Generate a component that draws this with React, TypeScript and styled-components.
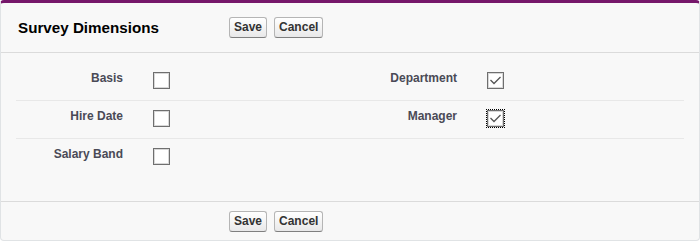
import styled, { createGlobalStyle } from 'styled-components';

const GlobalStyle = createGlobalStyle`
  html, body {
    margin: 0;
    padding: 0;
    background: #ffffff;
  }
  body {
    font-family: "Liberation Sans", Arial, sans-serif;
  }
`;

const PageBlock = styled.div`
  box-sizing: border-box;
  width: 700px;
  height: 241px;
  background: #f8f8f8;
  border: 1px solid #e0e3e5;
  border-top: 3px solid #76176a;
  border-radius: 4px;
  display: flex;
  flex-direction: column;
`;

const Bar = styled.div<{ $footer?: boolean }>`
  display: flex;
  align-items: center;
  height: ${(p) => (p.$footer ? '38px' : '49px')};
  padding-left: 17px;
  border-top: ${(p) => (p.$footer ? '1px solid #dbdbdb' : 'none')};
  border-bottom: ${(p) => (p.$footer ? 'none' : '1px solid #dbdbdb')};
`;

const Title = styled.h2`
  margin: 0;
  width: 211px;
  font-size: 15.2px;
  font-weight: bold;
  color: #000;
`;

const Buttons = styled.div`
  display: flex;
  gap: 7px;
`;

const Btn = styled.button`
  font-family: "Liberation Sans", Arial, sans-serif;
  font-size: 12px;
  font-weight: bold;
  line-height: 15px;
  color: #333;
  padding: 2px 4px;
  margin: 0;
  border: 1px solid #b5b5b5;
  border-bottom-color: #7f7f7f;
  border-radius: 3px;
  background: linear-gradient(#ffffff, #f4f4f4 50%, #e8e8e9);
  cursor: pointer;
`;

const Body = styled.div`
  flex: 1;
  padding: 10px 15px 0;
`;

const Row = styled.div<{ $last?: boolean }>`
  display: grid;
  grid-template-columns: 120px 214px 120px 214px;
  height: 38px;
  box-sizing: border-box;
  padding-top: 7px;
  border-bottom: ${(p) => (p.$last ? 'none' : '1px solid #e8e8e8')};
`;

const Label = styled.div`
  text-align: right;
  padding-right: 13px;
  font-size: 12px;
  font-weight: bold;
  line-height: 16px;
  color: #4a4a56;
`;

const DataCell = styled.div`
  padding-left: 17px;
  padding-top: 2px;
`;

const Box = styled.span<{ $focus?: boolean }>`
  display: block;
  box-sizing: border-box;
  width: 17px;
  height: 17px;
  background: #fff;
  border: 1px solid #6f6f6f;
  box-shadow: inset 0 0 0 1px #d8d8d8;
  outline: ${(p) => (p.$focus ? '1px dotted #000' : 'none')};
  outline-offset: 0;
  svg {
    display: block;
  }
`;

const Check = ({ checked, focus }: { checked?: boolean; focus?: boolean }) => (
  <Box $focus={focus}>
    {checked && (
      <svg width="15" height="15" viewBox="0 0 15 15">
        <path d="M2.5 7 L6 10.5 L12.5 4" fill="none" stroke="#555" strokeWidth="1.3" />
      </svg>
    )}
  </Box>
);

const ActionButtons = () => (
  <Buttons>
    <Btn>Save</Btn>
    <Btn>Cancel</Btn>
  </Buttons>
);

const App = () => (
  <>
    <GlobalStyle />
    <PageBlock>
      <Bar>
        <Title>Survey Dimensions</Title>
        <ActionButtons />
      </Bar>
      <Body>
        <Row>
          <Label>Basis</Label>
          <DataCell>
            <Check />
          </DataCell>
          <Label>Department</Label>
          <DataCell>
            <Check checked />
          </DataCell>
        </Row>
        <Row>
          <Label>Hire Date</Label>
          <DataCell>
            <Check />
          </DataCell>
          <Label>Manager</Label>
          <DataCell>
            <Check checked focus />
          </DataCell>
        </Row>
        <Row $last>
          <Label>Salary Band</Label>
          <DataCell>
            <Check />
          </DataCell>
          <Label />
          <DataCell />
        </Row>
      </Body>
      <Bar $footer>
        <Title />
        <ActionButtons />
      </Bar>
    </PageBlock>
  </>
);

export default App;
